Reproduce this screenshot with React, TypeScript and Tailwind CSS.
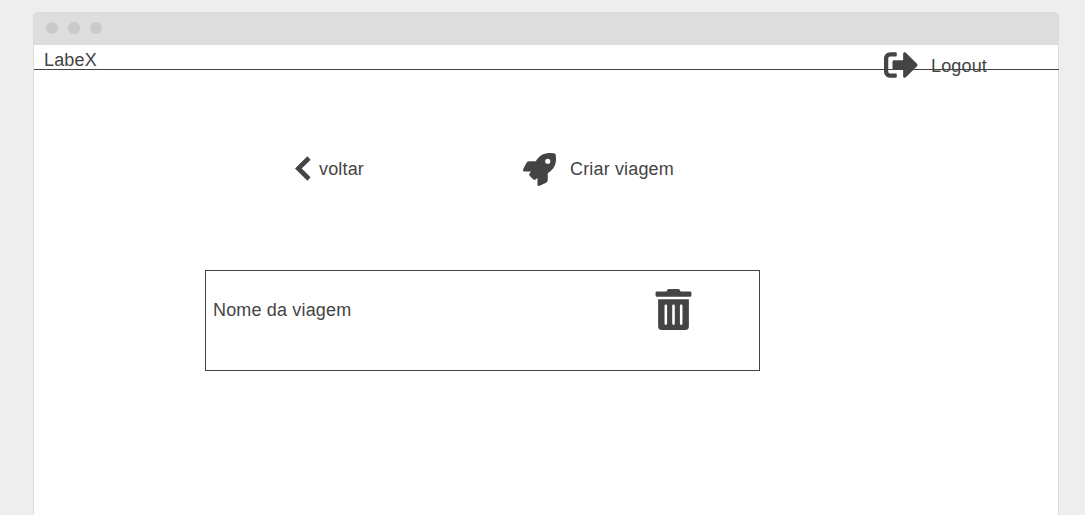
import { FaRocket, FaTrashAlt, FaSignOutAlt } from "react-icons/fa";

function BackArrow() {
  return (
    <svg className="h-[26px] w-4" viewBox="0 0 16 26" fill="none" aria-hidden="true">
      <path d="M14 2 3.3 12.5 14 23" stroke="currentColor" strokeWidth="4.6" />
    </svg>
  );
}

export default function App() {
  return (
    <div className="h-[515px] overflow-hidden bg-[#eeeeee] pt-3 pl-[33px] font-['Liberation_Sans',Arial,sans-serif] text-[18px] leading-[20px] tracking-[0.16px] text-[#444444]">
      <div className="flex h-[520px] w-[1026px] flex-col rounded-t-[5px] border border-t-0 border-[#dddddd] bg-white">
        <div className="-mx-px flex h-[33px] shrink-0 items-center gap-[10px] rounded-t-[5px] bg-[#dddddd] pb-px pl-[13px]">
          <i className="size-3 rounded-full bg-[#cacaca]" />
          <i className="size-3 rounded-full bg-[#cacaca]" />
          <i className="size-3 rounded-full bg-[#cacaca]" />
        </div>
        <header className="-mr-px flex h-[25px] shrink-0 items-start justify-between border-b border-[#444444] pr-[72px] pl-[10px]">
          <span className="pt-[5px]">LabeX</span>
          <button className="flex items-center gap-[13px] pt-[3px]">
            <FaSignOutAlt size={34} />
            <span className="pt-[2px]">Logout</span>
          </button>
        </header>
        <nav className="mt-[82px] flex h-[34px] shrink-0 items-center pl-[261px]">
          <button className="flex w-[228px] items-center gap-2">
            <BackArrow />
            <span>voltar</span>
          </button>
          <button className="flex items-center gap-[14px]">
            <FaRocket size={33} />
            <span>Criar viagem</span>
          </button>
        </nav>
        <main className="mt-[84px] ml-[171px] flex h-[101px] w-[555px] items-start justify-between border border-[#444444] pt-[18px] pr-[65px] pl-[7px]">
          <span className="pt-[11px]">Nome da viagem</span>
          <FaTrashAlt size={41} />
        </main>
      </div>
    </div>
  );
}
